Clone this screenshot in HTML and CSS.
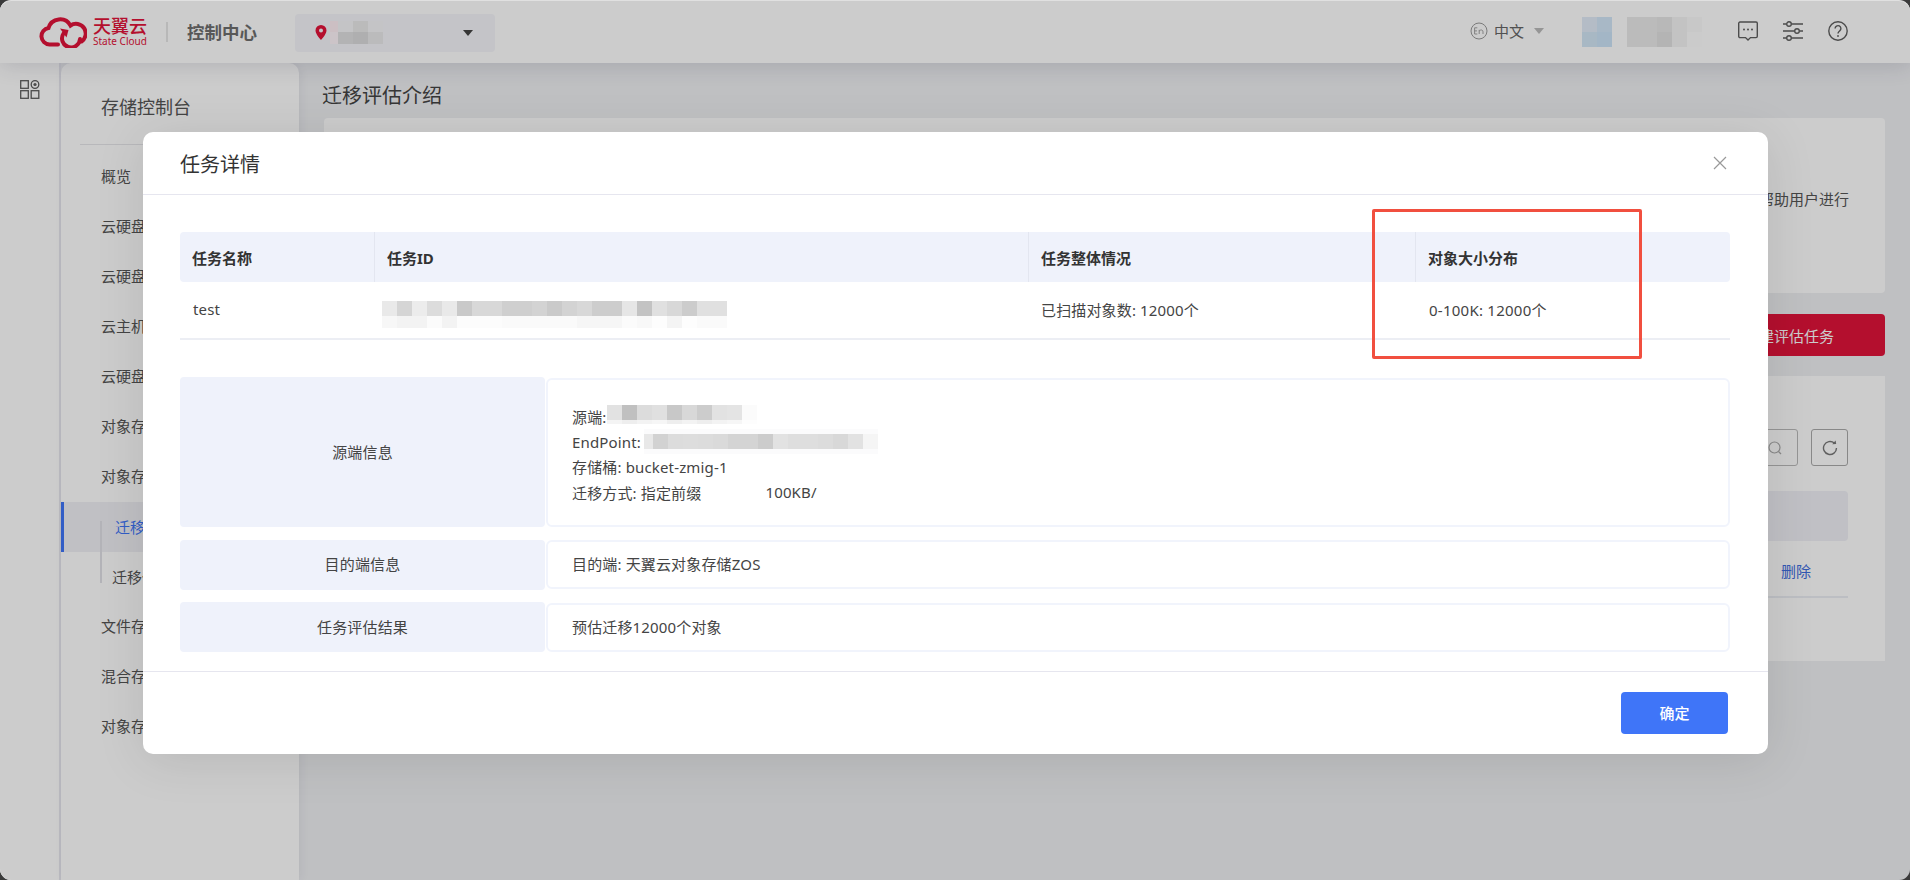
FILE: index.html
```html
<!DOCTYPE html>
<html lang="zh-CN">
<head>
<meta charset="utf-8">
<title>任务详情</title>
<link rel="stylesheet" href="styles.css">
</head>
<body>
<div class="app">
  <header class="topbar">
    <div class="brand">
      <svg class="brand-cloud" width="48" height="31" viewBox="0 0 48 31" fill="none" stroke="#e2133a" stroke-width="4" stroke-linecap="round">
        <path d="M19 27.5H10.5A8.3 8.3 0 0 1 9.5 11A12 12 0 0 1 31.5 8.5A8.4 8.4 0 0 1 42.5 24.5"/>
        <path d="M24.5 16.5A9 9 0 1 0 41 22" />
        <path d="M21 11.5l8.5 1.5-2 7.5z" fill="#e2133a" stroke="none"/>
      </svg>
      <div class="brand-text">
        <span class="brand-cn">天翼云</span>
        <span class="brand-en">State Cloud</span>
      </div>
    </div>
    <span class="brand-sep"></span>
    <span class="brand-title">控制中心</span>
    <div class="region">
      <svg width="12" height="15" viewBox="0 0 12 15"><path d="M6 0a5.5 5.5 0 0 0-5.5 5.5C.5 9.300 6 15 6 15s5.500-5.700 5.500-9.500A5.500 5.500 0 0 0 6 0zm0 7.500a2 2 0 1 1 0-4 2 2 0 0 1 0 4z" fill="#e2133a"/></svg>
      <span class="mosaic mosaic-region"></span>
      <span class="caret caret-dark"></span>
    </div>
    <div class="top-right">
      <svg class="lang-icon" width="18" height="18" viewBox="0 0 18 18" fill="none" stroke="#999"><circle cx="9" cy="9" r="8"/><path d="M7.300 5.800H4.600v6.200h2.700M4.600 8.900h2.400M9.200 12V7.800m0 1.200c1.500-1.700 3.800-1.200 3.800.8v2.200" stroke-width=".9"/></svg>
      <span class="lang">中文</span>
      <span class="caret caret-light"></span>
      <span class="mosaic mosaic-avatar"></span>
      <span class="mosaic mosaic-name"></span>
      <div class="top-icons">
        <svg width="20" height="20" viewBox="0 0 20 20" fill="none" stroke="#5f5f5f" stroke-width="1.400"><path d="M2 1h16a1.300 1.300 0 0 1 1.300 1.300v13a1.300 1.300 0 0 1-1.300 1.300h-5.500L10 19l-2.500-2.400H2A1.300 1.300 0 0 1 .7 15.300v-13A1.300 1.300 0 0 1 2 1z"/><circle cx="6" cy="8.500" r="1" fill="#5f5f5f" stroke="none"/><circle cx="10" cy="8.500" r="1" fill="#5f5f5f" stroke="none"/><circle cx="14" cy="8.500" r="1" fill="#5f5f5f" stroke="none"/></svg>
        <svg width="20" height="20" viewBox="0 0 20 20" fill="none" stroke="#5f5f5f" stroke-width="1.400"><path d="M0 3h3.500M8.500 3H20M0 10h11.500M16.500 10H20M0 17h3.500M8.500 17H20"/><circle cx="6" cy="3" r="2.300"/><circle cx="14" cy="10" r="2.300"/><circle cx="6" cy="17" r="2.300"/></svg>
        <svg width="20" height="20" viewBox="0 0 20 20" fill="none" stroke="#5f5f5f" stroke-width="1.400"><circle cx="10" cy="10" r="9.200"/><path d="M7.100 7.600a2.900 2.900 0 1 1 4.600 2.300c-1 .8-1.700 1.300-1.700 2.700"/><circle cx="10" cy="15" r=".9" fill="#5f5f5f" stroke="none"/></svg>
      </div>
    </div>
  </header>

  <div class="workspace">
    <aside class="rail">
      <svg width="20" height="19" viewBox="0 0 20 19" fill="none" stroke="#5f5f5f" stroke-width="1.300"><rect x=".7" y=".7" width="7.600" height="7.600"/><circle cx="15" cy="4.500" r="3.800"/><circle cx="15" cy="4.500" r="1.600" fill="#5f5f5f" stroke="none"/><rect x=".7" y="10.700" width="7.600" height="7.600"/><rect x="11.200" y="10.700" width="7.600" height="7.600"/></svg>
    </aside>
    <nav class="side">
      <h2 class="side-title">存储控制台</h2>
      <ul class="menu">
        <li class="menu-item">概览</li>
        <li class="menu-item">云硬盘备份</li>
        <li class="menu-item">云硬盘快照</li>
        <li class="menu-item">云主机备份</li>
        <li class="menu-item">云硬盘存储池</li>
        <li class="menu-item">对象存储</li>
        <li class="menu-item">对象存储迁移</li>
        <li class="menu-item menu-child menu-active">迁移评估</li>
        <li class="menu-item menu-child">迁移任务</li>
        <li class="menu-item">文件存储</li>
        <li class="menu-item">混合存储</li>
        <li class="menu-item">对象存储网关</li>
      </ul>
    </nav>
    <main class="content">
      <h1 class="page-title">迁移评估介绍</h1>
      <section class="card intro">
        <p class="intro-text">迁移评估服务对源端存储桶内的对象进行扫描分析，帮助用户进行</p>
      </section>
      <div class="actions"><button class="btn-danger">新建评估任务</button></div>
      <section class="card list">
        <div class="list-tools">
          <span class="search">
            <svg width="14" height="14" viewBox="0 0 14 14" fill="none" stroke="#aaa" stroke-width="1.200"><circle cx="6.500" cy="6.500" r="5.500"/><path d="M10.500 10.500l2.500 2.500"/></svg>
          </span>
          <span class="refresh">
            <svg width="16" height="16" viewBox="0 0 16 16" fill="none" stroke="#777" stroke-width="1.400"><path d="M14.500 8A6.500 6.500 0 1 1 12.300 3.100"/><path d="M10.200 4.200l4-.2-.6-3.500z" fill="#777" stroke="none"/></svg>
          </span>
        </div>
        <div class="list-head"></div>
        <div class="list-row"><a class="link-del">删除</a></div>
      </section>
    </main>
  </div>

  <div class="overlay">
    <div class="modal">
      <header class="modal-head">
        <h3 class="modal-title">任务详情</h3>
        <svg width="14" height="14" viewBox="0 0 14 14" fill="none" stroke="#999" stroke-width="1.200"><path d="M1 1l12 12M13 1L1 13"/></svg>
      </header>
      <div class="modal-body">
        <table class="task-table">
          <colgroup><col class="col-a"><col class="col-b"><col class="col-c"><col class="col-d"></colgroup>
          <thead>
            <tr><th>任务名称</th><th>任务ID</th><th>任务整体情况</th><th>对象大小分布</th></tr>
          </thead>
          <tbody>
            <tr>
              <td>test</td>
              <td class="cell-id"><span class="mosaic mosaic-id"></span></td>
              <td>已扫描对象数: 12000个</td>
              <td class="cell-size">0-100K: 12000个</td>
            </tr>
          </tbody>
        </table>

        <div class="info-row info-first">
          <div class="info-label">源端信息</div>
          <div class="info-value info-lines">
            <div class="line">源端:<span class="mosaic mosaic-src"></span></div>
            <div class="line">EndPoint:<span class="mosaic mosaic-end"></span></div>
            <div class="line">存储桶: bucket-zmig-1</div>
            <div class="line">迁移方式: 指定前缀<span class="line-extra">100KB/</span></div>
          </div>
        </div>
        <div class="info-row info-second">
          <div class="info-label">目的端信息</div>
          <div class="info-value">目的端: 天翼云对象存储ZOS</div>
        </div>
        <div class="info-row info-third">
          <div class="info-label">任务评估结果</div>
          <div class="info-value">预估迁移12000个对象</div>
        </div>
      </div>
      <footer class="modal-foot"><button class="btn-primary">确定</button></footer>
      <div class="annotation"></div>
    </div>
  </div>
</div>
</body>
</html>
```
FILE: styles.css
```css
* { box-sizing: border-box; }
html, body { margin: 0; padding: 0; height: 100%; background: #3a3a3a; overflow: hidden; }
body { font-family: "Noto Sans", "Noto Sans CJK SC", sans-serif; font-size: 15px; color: #333; }
h1, h2, h3, p, ul { margin: 0; padding: 0; font-weight: 400; }
ul { list-style: none; }
button { font-family: inherit; border: 0; }

.app {
  position: relative;
  width: 1910px;
  height: 880px;
  overflow: hidden;
  border-radius: 11px;
  background: #eff0f3;
  border-top: 1px solid #e0e0e0;
  display: flex;
  flex-direction: column;
}

/* top bar */
.topbar {
  position: relative;
  z-index: 2;
  flex: 0 0 62px;
  display: flex;
  align-items: center;
  padding: 0 62px 0 39px;
  background: #fff;
  box-shadow: 0 2px 22px rgba(40, 40, 70, .16);
}
.brand { display: flex; align-items: center; gap: 6px; }
.brand-text { display: flex; flex-direction: column; width: 55px; color: #e2133a; }
.brand-cn { font-size: 18px; line-height: 19px; white-space: nowrap; font-weight: 500; }
.brand-en { font-size: 10px; line-height: 11px; white-space: nowrap; }
.brand-sep { width: 2px; height: 20px; margin-left: 18px; background: #e6e6e6; }
.brand-title { margin: -2px 0 0 19px; font-size: 17.5px; font-weight: 700; color: #6e6e6e; white-space: nowrap; }
.region {
  display: flex;
  align-items: center;
  width: 200px;
  height: 38px;
  margin: 1px 0 0 38px;
  padding-left: 20px;
  border-radius: 4px;
  background: #f5f6fa;
}
.caret { display: block; width: 0; height: 0; border-style: solid; border-color: transparent; border-width: 6px 5px 0; }
.caret-dark { border-top-color: #444; margin-left: 80px; }
.caret-light { border-top-color: #bbb; margin: -3px 0 0 10px; }
.top-right { display: flex; align-items: center; margin-left: auto; }
.lang-icon { margin-top: -3px; }
.lang { margin: -4px 0 0 6px; font-size: 15px; color: #666; }
.top-icons { display: flex; gap: 25px; margin: -2px 0 0 36px; }

.mosaic { display: block; flex: none; }
.mosaic-region {
  width: 53px;
  height: 23px;
  margin-left: 3px;
  background:
    linear-gradient(90deg, #ffeff4 0 8px, #f5f5f8 0 23px, #eaeaea 0 38px, #f5f5f8 0 53px) top / 53px 11px no-repeat,
    linear-gradient(90deg, #fff6fa 0 8px, #e0e0e2 0 23px, #dbdbdd 0 38px, #eaeaec 0 53px) bottom / 53px 12px no-repeat;
}
.mosaic-avatar {
  width: 30px;
  height: 30px;
  margin-left: 38px;
  background:
    linear-gradient(90deg, #e2ecf8 0 15px, #d3e6f8 0 30px) top / 30px 15px no-repeat,
    linear-gradient(90deg, #d3e6f5 0 15px, #cce4f8 0 30px) bottom / 30px 15px no-repeat;
}
.mosaic-name {
  width: 75px;
  height: 30px;
  margin-left: 15px;
  background:
    linear-gradient(90deg, #eaeaea 0 30px, #e6e6e6 0 45px, #f4f4f4 0 60px, #fafafa 0 75px) top / 75px 15px no-repeat,
    linear-gradient(90deg, #eaeaea 0 30px, #e2e2e2 0 45px, #f4f4f4 0 60px, #fefefe 0 75px) bottom / 75px 15px no-repeat;
}

/* workspace behind the dialog */
.workspace { flex: 1; display: flex; min-height: 0; }
.rail { flex: 0 0 61px; padding: 17px 0 0 20px; background: #fff; border-right: 2px solid #e8e8f0; }
.side {
  position: relative;
  z-index: 1;
  flex: 0 0 238px;
  padding-top: 24px;
  border-radius: 10px 10px 0 0;
  background: #fff;
  box-shadow: 2px 0 10px rgba(40, 40, 70, .06);
}
.side-title { margin-left: 40px; font-size: 18px; line-height: 40px; color: #555; white-space: nowrap; }
.menu { margin: 17px 19px 0; padding-top: 7px; border-top: 1px solid #e6e6ea; }
.menu-item { height: 50px; margin: 0 -19px; padding-left: 40px; line-height: 48px; font-size: 15px; color: #555; white-space: nowrap; }
.menu-child { position: relative; padding-left: 51px; line-height: 50px; }
.menu-child::before { content: ""; position: absolute; left: 39px; top: 0; bottom: 19px; width: 2px; background: #e2e2e8; }
.menu-active { padding-left: 54px; color: #3f75f8; background: #f0f1f5; box-shadow: inset 3px 0 0 #3f75f8; }
.menu-active::before { top: 19px; bottom: 0; }

.content { flex: 1; min-width: 0; padding: 19px 25px 0 23px; }
.page-title { font-size: 20px; line-height: 28px; color: #444; }
.card { margin: 8px 0 0 2px; border-radius: 4px; background: #fff; }
.intro { height: 175px; padding: 70px 36px 0 0; text-align: right; }
.intro-text { font-size: 15px; line-height: 22px; color: #555; }
.actions { display: flex; justify-content: flex-end; margin-top: 21px; }
.btn-danger { width: 192px; height: 42px; border-radius: 4px; background: #e2133a; color: #fff; font-size: 15px; }
.list { height: 285px; margin-top: 20px; padding: 53px 37px 0 0; border-radius: 0; }
.list-tools { display: flex; justify-content: flex-end; gap: 13px; }
.search, .refresh { display: flex; align-items: center; height: 37px; border: 1px solid #aaa; border-radius: 3px; }
.search { width: 300px; justify-content: flex-end; padding-right: 15px; border-color: #bbb; }
.refresh { width: 37px; justify-content: center; }
.list-head { height: 50px; margin-top: 25px; border-radius: 4px; background: #f0f1f7; }
.list-row { height: 57px; padding-left: 1457px; line-height: 60px; border-bottom: 2px solid #eceef4; }
.link-del { font-size: 15px; color: #3f6ee0; white-space: nowrap; }

/* dialog */
.overlay { position: absolute; inset: -1px 0 0; z-index: 5; background: rgba(0, 0, 0, .2); }
.modal {
  position: absolute;
  left: 143px;
  top: 132px;
  width: 1625px;
  height: 622px;
  display: flex;
  flex-direction: column;
  border-radius: 10px;
  background: #fff;
  box-shadow: 0 6px 50px rgba(0, 0, 0, .1);
}
.modal-head {
  flex: 0 0 63px;
  display: flex;
  align-items: center;
  justify-content: space-between;
  padding: 0 41px 0 37px;
  border-bottom: 1px solid #e6e6ef;
}
.modal-title { font-size: 20px; color: #333; }
.modal-body { flex: 1; padding: 37px 38px 0 37px; letter-spacing: .15px; }

.task-table { width: 1550px; table-layout: fixed; border-collapse: separate; border-spacing: 0; border-bottom: 2px solid #eceef4; }
.col-a { width: 194px; }
.col-b { width: 654px; }
.col-c { width: 387px; }
.col-d { width: 315px; }
.task-table th {
  height: 50px;
  padding: 0 12px;
  text-align: left;
  font-size: 15px;
  font-weight: 700;
  letter-spacing: 0;
  color: #333;
  background: #eff2fb;
  border-left: 1px solid #e3e6f0;
}
.task-table th:first-child { border-left: 0; border-radius: 4px 0 0 4px; }
.task-table th:last-child { border-radius: 0 4px 4px 0; }
.task-table td { height: 56px; padding: 0 12px 2px; font-size: 15px; color: #444; border-left: 1px solid transparent; }
.task-table td:first-child { border-left: 0; padding-left: 13px; }
.task-table .cell-id { padding: 8px 0 0 7px; }
.task-table .cell-size { padding-left: 13px; letter-spacing: .25px; }
.mosaic-id {
  width: 345px;
  height: 27px;
  background:
    linear-gradient(90deg, #e9e9e9 0 15px, #d5d5d5 0 30px, #ececec 0 45px, #dcdcdc 0 60px, #e9e9e9 0 75px, #c9c9c9 0 90px, #d8d8d8 0 120px, #cfcfcf 0 150px, #d3d3d3 0 165px, #cacaca 0 180px, #d3d3d3 0 195px, #d8d8d8 0 210px, #cdcdcd 0 240px, #e6e6e6 0 255px, #c3c3c3 0 270px, #e0e0e0 0 285px, #d8d8d8 0 300px, #cccccc 0 315px, #e0e0e0 0 345px) top / 345px 15px no-repeat,
    linear-gradient(90deg, #f7f7f7 0 15px, #f3f3f3 0 45px, #fbfbfb 0 60px, #f3f3f3 0 75px, #fcfcfc 0 120px, #fafafa 0 195px, #f6f6f6 0 240px, #fbfbfb 0 255px, #f8f8f8 0 270px, #fdfdfd 0 285px, #f4f4f4 0 300px, #fdfdfd 0 315px, #fafafa 0 345px) bottom / 345px 12px no-repeat;
}

.info-row { display: flex; gap: 1px; height: 50px; }
.info-first { height: 150px; margin-top: 37px; }
.info-second { margin-top: 13px; }
.info-third { margin-top: 12px; }
.info-label {
  flex: 0 0 365px;
  display: flex;
  align-items: center;
  justify-content: center;
  padding-bottom: 2px;
  border-radius: 4px;
  background: #eff2fb;
  color: #444;
}
.info-second .info-label { padding-bottom: 4px; }
.info-value {
  flex: 1;
  display: flex;
  align-items: center;
  margin-top: 1px;
  padding: 0 0 2px 24px;
  border: 2px solid #f1f4fc;
  border-radius: 6px;
  color: #444;
}
.info-second .info-value { margin: 0 0 1px; padding-bottom: 3px; }
.info-lines { display: block; padding-top: 24px; }
.line { display: flex; align-items: center; height: 25.2px; white-space: nowrap; }
.mosaic-src {
  align-self: flex-start;
  width: 150px;
  height: 19px;
  margin: 1px 0 0 1px;
  background:
    linear-gradient(90deg, #e2e2e2 0 15px, #c0c0c0 0 30px, #dcdcdc 0 45px, #e0e0e0 0 60px, #c8c8c8 0 75px, #d8d8d8 0 90px, #cccccc 0 105px, #e2e2e2 0 120px, #e4e4e4 0 135px, #fbfbfb 0 150px) top / 150px 15px no-repeat,
    linear-gradient(90deg, #f4f4f4 0 15px, #eeeeee 0 30px, #f3f3f3 0 45px, #f6f6f6 0 60px, #eeeeee 0 75px, #f3f3f3 0 90px, #eeeeee 0 105px, #f3f3f3 0 120px, #f6f6f6 0 135px, #fdfdfd 0 150px) bottom / 150px 4px no-repeat;
}
.mosaic-end {
  width: 234px;
  height: 25px;
  margin-left: 3px;
  background:
    linear-gradient(90deg, #e8e8e8 0 9px, #d2d2d2 0 24px, #dcdcdc 0 39px, #dddddd 0 54px, #dcdcdc 0 69px, #dadada 0 84px, #d4d4d4 0 114px, #cccccc 0 129px, #e2e2e2 0 144px, #dedede 0 174px, #dcdcdc 0 189px, #d8d8d8 0 204px, #e2e2e2 0 219px, #f5f5f5 0 234px) center / 234px 15px no-repeat,
    #fbfbfc;
}
.line-extra { margin-left: 64px; }

.modal-foot {
  flex: 0 0 83px;
  display: flex;
  justify-content: flex-end;
  padding: 20px 40px 0 0;
  border-top: 1px solid #e6e6ef;
}
.btn-primary { width: 107px; height: 42px; padding-bottom: 2px; border-radius: 4px; background: #3f75f8; color: #fff; font-size: 15px; font-weight: 500; }
.annotation {
  position: absolute;
  left: 1229px;
  top: 77px;
  width: 270px;
  height: 150px;
  border: 3px solid #f14f3f;
  border-radius: 2px;
}
```
